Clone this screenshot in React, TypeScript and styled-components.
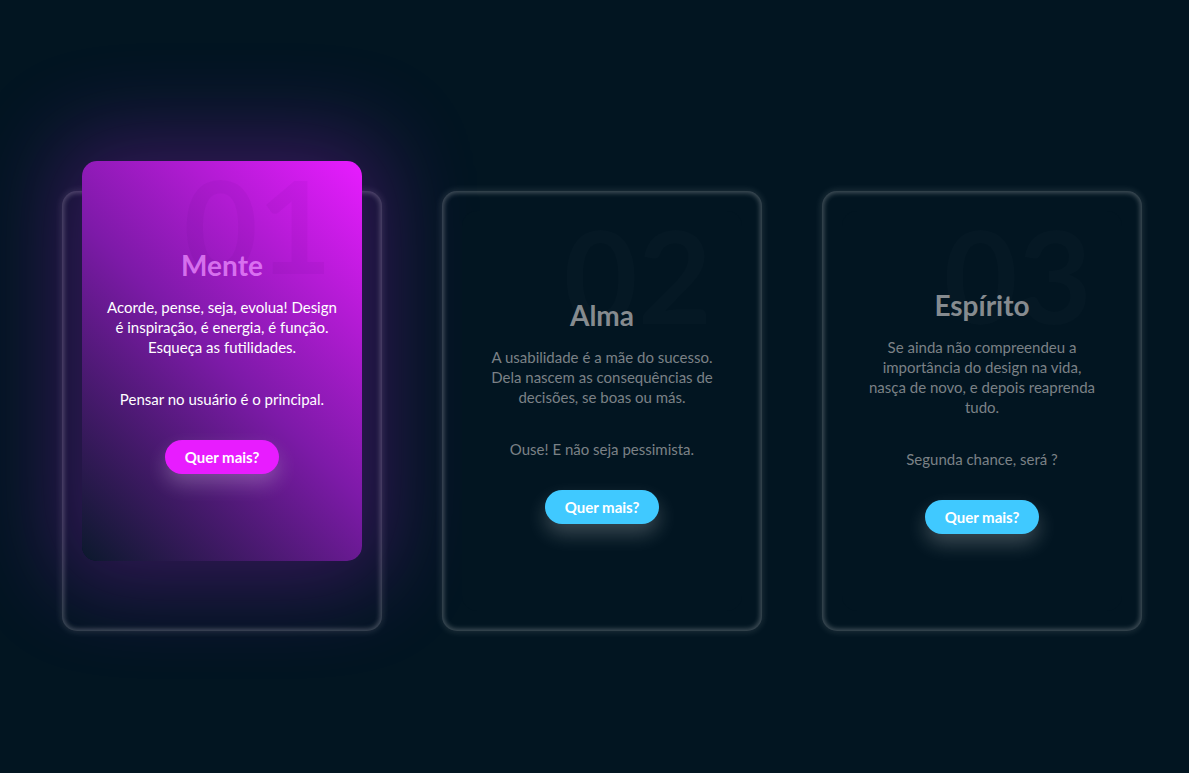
import React from "react";
import styled, { createGlobalStyle, css } from "styled-components";

const Global = createGlobalStyle`
  html, body {
    margin: 0;
    padding: 0;
    background: #021521;
    font-family: Lato, "Open Sans", sans-serif;
  }
`;

const Page = styled.div`
  min-height: 773px;
  box-sizing: border-box;
  display: flex;
  align-items: flex-start;
  gap: 60px;
  padding: 191px 0 0 62px;
  background: #021521;
`;

const Card = styled.div`
  position: relative;
  width: 320px;
  height: 440px;
  flex: none;
  border-radius: 15px;
  box-shadow: inset 0 0 5px 2px rgba(255, 255, 255, 0.26),
    0 0 7px 1px rgba(255, 255, 255, 0.12);
`;

const Box = styled.div<{ $active?: boolean }>`
  position: absolute;
  inset: 20px;
  border-radius: 15px;
  display: flex;
  align-items: center;
  justify-content: center;
  background: #021521;
  ${(p) =>
    p.$active &&
    css`
      transform: translateY(-50px);
      background: linear-gradient(45deg, #0b192c 0%, #7d1aa8 50%, #e81cff 100%);
      box-shadow: 0 0 90px 24px rgba(190, 30, 240, 0.27);
    `}
`;

const Digits = styled.span<{ $active?: boolean }>`
  position: absolute;
  top: 0;
  right: 30px;
  font-size: 128px;
  line-height: 1;
  font-weight: 700;
  color: ${(p) => (p.$active ? "rgba(60, 0, 90, 0.05)" : "rgba(255, 255, 255, 0.014)")};
  pointer-events: none;
`;

const Content = styled.div`
  position: relative;
  z-index: 1;
  width: 236px;
  text-align: center;
  display: flex;
  flex-direction: column;
  align-items: center;
`;

const Title = styled.h3<{ $active?: boolean }>`
  margin: 0 0 15px;
  font-size: 28px;
  line-height: 34px;
  font-weight: 700;
  color: ${(p) => (p.$active ? "rgba(236, 140, 255, 0.75)" : "#868b8f")};
`;

const Text = styled.p<{ $active?: boolean }>`
  margin: 0;
  font-size: 15px;
  line-height: 20px;
  color: ${(p) => (p.$active ? "#ffffff" : "#7b8186")};
  & + & {
    margin-top: 32px;
  }
`;

const Button = styled.a<{ $active?: boolean }>`
  display: inline-block;
  margin-top: 31px;
  padding: 7px 20px;
  border-radius: 20px;
  font-size: 15px;
  line-height: 20px;
  font-weight: 700;
  color: #ffffff;
  text-decoration: none;
  background: ${(p) => (p.$active ? "#e81cff" : "#40c9ff")};
  box-shadow: 0 10px 20px rgba(255, 255, 255, 0.22);
`;

const cards = [
  {
    n: "01",
    title: "Mente",
    lines: [
      "Acorde, pense, seja, evolua! Design é inspiração, é energia, é função. Esqueça as futilidades.",
      "Pensar no usuário é o principal.",
    ],
    active: true,
  },
  {
    n: "02",
    title: "Alma",
    lines: [
      "A usabilidade é a mãe do sucesso. Dela nascem as consequências de decisões, se boas ou más.",
      "Ouse! E não seja pessimista.",
    ],
  },
  {
    n: "03",
    title: "Espírito",
    lines: [
      "Se ainda não compreendeu a importância do design na vida, nasça de novo, e depois reaprenda tudo.",
      "Segunda chance, será ?",
    ],
  },
];

export default function App() {
  return (
    <>
      <Global />
      <Page>
        {cards.map((c) => (
          <Card key={c.n}>
            <Box $active={c.active}>
              <Digits $active={c.active}>{c.n}</Digits>
              <Content>
                <Title $active={c.active}>{c.title}</Title>
                {c.lines.map((l) => (
                  <Text key={l} $active={c.active}>
                    {l}
                  </Text>
                ))}
                <Button href="#" $active={c.active}>
                  Quer mais?
                </Button>
              </Content>
            </Box>
          </Card>
        ))}
      </Page>
    </>
  );
}
